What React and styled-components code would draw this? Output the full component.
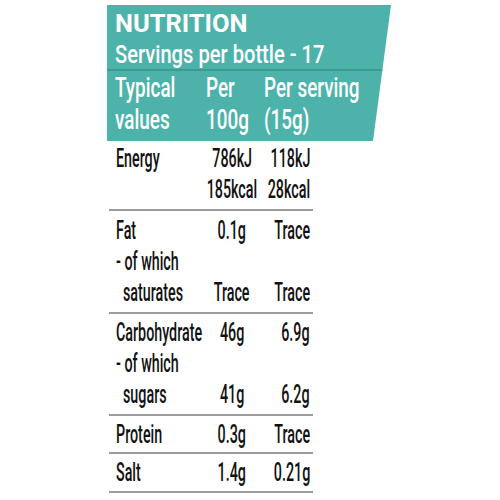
import React from "react";
import styled, { createGlobalStyle } from "styled-components";

const GlobalStyle = createGlobalStyle`
  html, body {
    margin: 0;
    background: #ffffff;
    overflow: hidden;
  }
  body {
    font-family: Roboto, "Open Sans", "Liberation Sans", sans-serif;
  }
`;

const Page = styled.div`
  width: 500px;
  height: 500px;
  padding: 5px 0 0 107px;
  box-sizing: border-box;
`;

const Panel = styled.section`
  width: 284px;
  height: 136px;
  background: #4db3aa;
  color: #ffffff;
  clip-path: polygon(0 0, 100% 0, calc(100% - 18px) 100%, 0 100%);
`;

const TitleBlock = styled.div`
  height: 66px;
  padding: 2px 0 0 8px;
  box-sizing: border-box;
  border-bottom: 2px solid #3b9a92;
`;

const TitleLine = styled.div`
  font-size: 26.5px;
  line-height: 31px;
  font-weight: ${(p) => p.$weight};
`;

const ColumnHead = styled.div`
  display: grid;
  grid-template-columns: 91px 58px minmax(0, 1fr);
  padding: 1px 0 0 8px;
  font-size: 27px;
  line-height: 32px;
  font-weight: 500;
`;

const Fit = styled.span`
  display: inline-block;
  white-space: nowrap;
  transform: scaleX(${(p) => p.$sx});
  transform-origin: ${(p) => p.$origin} center;
`;

const Table = styled.div`
  width: 204px;
  margin-left: 2px;
  color: #121212;
  font-size: 26px;
  line-height: 31px;
  font-weight: 500;
`;

const Section = styled.div`
  padding: ${(p) => p.$top}px 0 ${(p) => p.$bottom}px;
  border-bottom: 2px solid #9c9c9c;
`;

const Row = styled.div`
  display: grid;
  grid-template-columns: 91px 64px minmax(0, 1fr);
  padding-right: 3px;
`;

const Cell = styled.div`
  display: flex;
  min-width: 0;
  justify-content: ${(p) => p.$justify};
  padding-left: ${(p) => p.$indent || 0}px;
`;

const BODY_SX = 0.55;
const HEAD_SX = 0.7;

const Label = ({ children, indent }) => (
  <Cell $justify="flex-start" $indent={7 + (indent || 0)}>
    <Fit $sx={BODY_SX} $origin="left">{children}</Fit>
  </Cell>
);

const Per100 = ({ children }) => (
  <Cell $justify="center">
    <Fit $sx={BODY_SX} $origin="center">{children}</Fit>
  </Cell>
);

const PerServing = ({ children }) => (
  <Cell $justify="flex-end">
    <Fit $sx={BODY_SX} $origin="right">{children}</Fit>
  </Cell>
);

const Line = ({ label, indent, a, b }) => (
  <Row>
    <Label indent={indent}>{label}</Label>
    <Per100>{a}</Per100>
    <PerServing>{b}</PerServing>
  </Row>
);

const sections = [
  {
    pad: [2, 4],
    lines: [
      { label: "Energy", a: "786kJ", b: "118kJ" },
      { label: "", a: "185kcal", b: "28kcal" },
    ],
  },
  {
    pad: [4, 4],
    lines: [
      { label: "Fat", a: "0.1g", b: "Trace" },
      { label: "- of which", a: "", b: "" },
      { label: "saturates", indent: 7, a: "Trace", b: "Trace" },
    ],
  },
  {
    pad: [3, 4],
    lines: [
      { label: "Carbohydrate", a: "46g", b: "6.9g" },
      { label: "- of which", a: "", b: "" },
      { label: "sugars", indent: 7, a: "41g", b: "6.2g" },
    ],
  },
  {
    pad: [3, 2],
    lines: [{ label: "Protein", a: "0.3g", b: "Trace" }],
  },
  {
    pad: [3, 3],
    lines: [{ label: "Salt", a: "1.4g", b: "0.21g" }],
  },
];

export default function App() {
  return (
    <Page>
      <GlobalStyle />
      <Panel>
        <TitleBlock>
          <TitleLine $weight={700}>
            <Fit $sx={0.96} $origin="left">NUTRITION</Fit>
          </TitleLine>
          <TitleLine $weight={500}>
            <Fit $sx={0.76} $origin="left">Servings per bottle - 17</Fit>
          </TitleLine>
        </TitleBlock>
        <ColumnHead>
          <Fit $sx={HEAD_SX} $origin="left">Typical</Fit>
          <Fit $sx={HEAD_SX} $origin="left">Per</Fit>
          <Fit $sx={HEAD_SX} $origin="left">Per serving</Fit>
          <Fit $sx={HEAD_SX} $origin="left">values</Fit>
          <Fit $sx={HEAD_SX} $origin="left">100g</Fit>
          <Fit $sx={HEAD_SX} $origin="left">(15g)</Fit>
        </ColumnHead>
      </Panel>
      <Table>
        {sections.map((s, i) => (
          <Section key={i} $top={s.pad[0]} $bottom={s.pad[1]}>
            {s.lines.map((l, j) => (
              <Line key={j} {...l} />
            ))}
          </Section>
        ))}
      </Table>
    </Page>
  );
}
